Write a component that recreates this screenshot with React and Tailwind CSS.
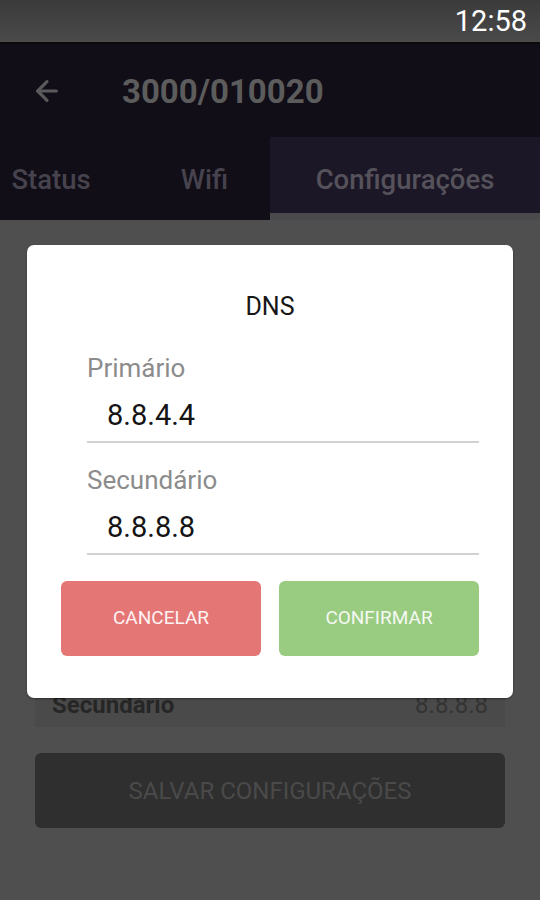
import React from 'react';
import { ArrowLeft } from 'lucide-react';

const TABS = [
  { label: 'Status', className: 'w-[102px]' },
  { label: 'Wifi', className: 'w-[168px] pl-[37px]' },
];

const DnsField = ({ label, value }) => (
  <div className="flex flex-col">
    <p className="h-[28px] text-[26px] leading-[28px] text-[#8c8c8c]">{label}</p>
    <p className="mt-[16px] h-[34px] pl-[20px] text-[29px] leading-[34px] text-[#141414]">{value}</p>
    <div className="mt-[9px] h-[2px] bg-[#d2d2d2]" />
  </div>
);

const App = () => {
  return (
    <div
      className="relative flex h-[900px] w-[540px] flex-col overflow-hidden bg-[#4f4f4f]"
      style={{ fontFamily: 'Roboto, "Noto Sans", sans-serif' }}
    >
      {/* status bar */}
      <div className="flex h-[42px] items-center justify-end bg-gradient-to-b from-[#3b3b3b] to-[#4a4a4a] pr-[13px]">
        <span className="text-[29px] leading-none text-white">12:58</span>
      </div>
      <div className="h-[2px] bg-[#0b0b0b]" />

      {/* app bar */}
      <div className="flex h-[93px] items-center bg-[#110e18]">
        <ArrowLeft className="ml-[31px] text-[#5a5a5a]" size={32} strokeWidth={2.4} />
        <h1 className="ml-[59px] mt-[2px] text-[33px] font-bold leading-none text-[#5c5c5c]">3000/010020</h1>
      </div>

      {/* tabs */}
      <div className="flex h-[83px] bg-[#110e18]">
        {TABS.map((tab) => (
          <div key={tab.label} className={`flex h-[76px] items-center justify-center pt-[10px] ${tab.className}`}>
            <span className="text-[27.5px] font-medium text-[#46434e]">{tab.label}</span>
          </div>
        ))}
        <div className="flex w-[270px] flex-col">
          <div className="flex h-[76px] items-center justify-center bg-[#1c1726] pt-[10px]">
            <span className="text-[27.5px] font-medium text-[#55525b]">Configurações</span>
          </div>
          <div className="h-[7px] bg-[#4a494c]" />
        </div>
      </div>

      {/* dimmed settings content */}
      <div className="flex flex-col px-[35px]">
        <div className="mt-[40px] flex h-[467px] flex-col justify-end rounded-t-sm bg-[#4a4a4a]">
          <div className="flex h-[45px] items-center justify-between px-[17px]">
            <span className="text-[24px] font-bold text-[#262626]">Secundário</span>
            <span className="text-[24px] text-[#333333]">8.8.8.8</span>
          </div>
        </div>
        <button className="mt-[26px] flex h-[75px] items-center justify-center rounded-[6px] bg-[#2f2f2f]">
          <span className="text-[24px] text-[#4a4a4a]">SALVAR CONFIGURAÇÕES</span>
        </button>
      </div>

      {/* DNS dialog */}
      <div className="absolute left-[27px] top-[245px] flex h-[453px] w-[486px] flex-col rounded-[7px] bg-white shadow-[0_1px_2px_rgba(0,0,0,0.4)]">
        <h2 className="mt-[48px] h-[28px] text-center text-[25px] font-normal leading-[28px] text-[#161616]">DNS</h2>
        <div className="mt-[33px] flex flex-col gap-[23px] pl-[60px] pr-[34px]">
          <DnsField label="Primário" value="8.8.4.4" />
          <DnsField label="Secundário" value="8.8.8.8" />
        </div>
        <div className="mt-[26px] flex gap-[18px] px-[34px]">
          <button className="flex h-[75px] flex-1 items-center justify-center rounded-[6px] bg-[#e57676] text-[19px] text-[#fef3f3]">
            CANCELAR
          </button>
          <button className="flex h-[75px] flex-1 items-center justify-center rounded-[6px] bg-[#99cb81] text-[19px] text-[#f5f9f2]">
            CONFIRMAR
          </button>
        </div>
      </div>
    </div>
  );
};

export default App;
